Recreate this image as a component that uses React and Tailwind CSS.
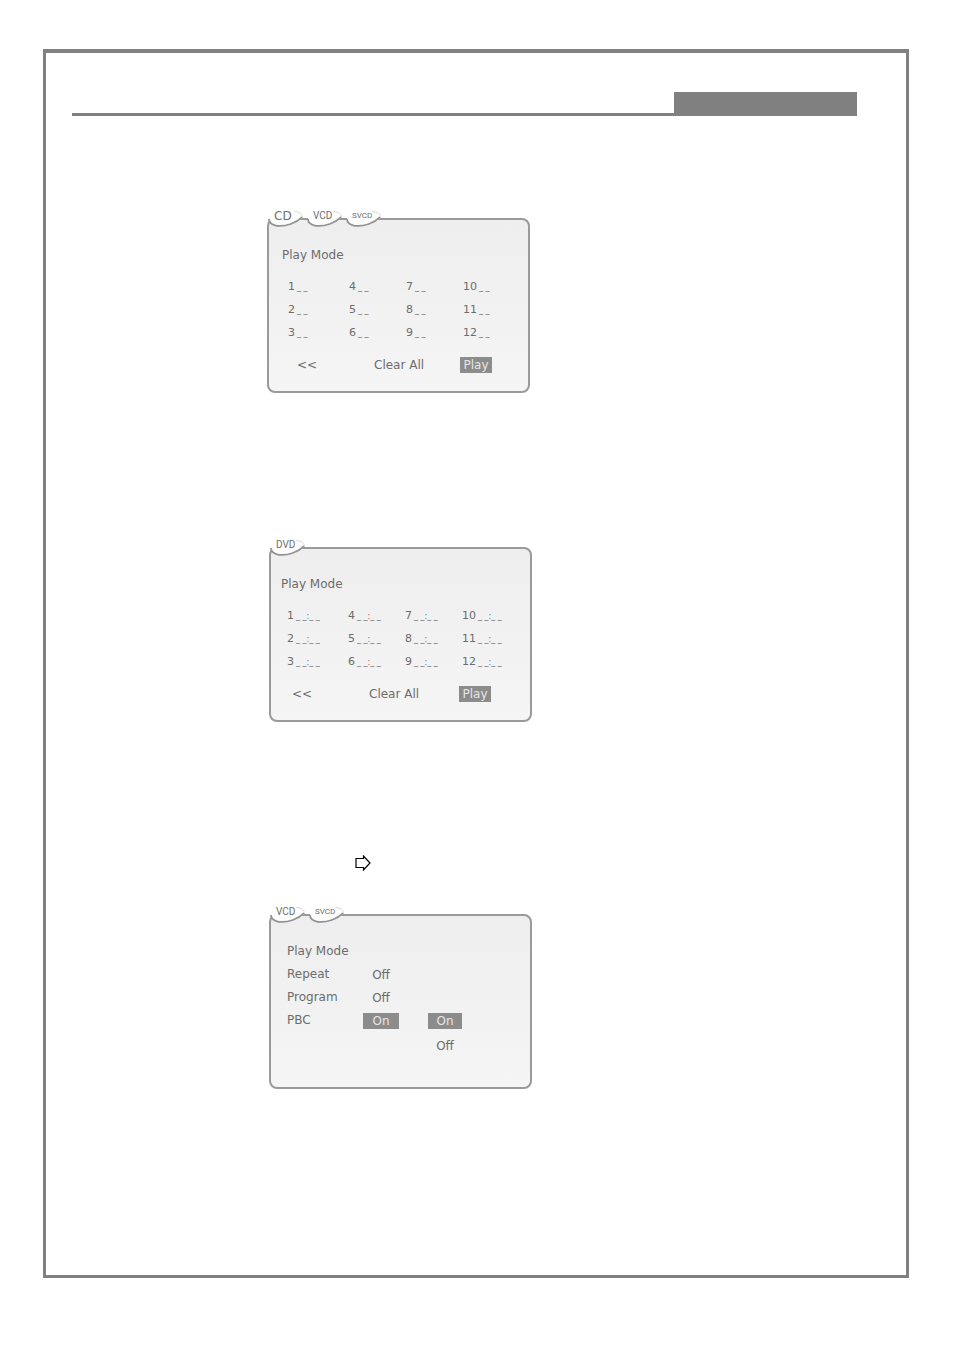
import clsx from "clsx";

const SLOT_ROWS = [
  [1, 4, 7, 10],
  [2, 5, 8, 11],
  [3, 6, 9, 12],
];

function DiscTab({ label, className }) {
  return (
    <span className="relative block h-[18px] w-[35px]">
      <svg viewBox="0 0 36 18" className="absolute inset-0 h-full w-full" fill="none">
        <path d="M1 8 C4 2 12 0 24 1 C32 1 36 4 35 8 C29 14 19 18 9 16 C4 15 1 12 1 8Z" fill="#fdfdfd" />
        <path d="M27 1 C33 2 36 4 35 8" stroke="#d4d4d4" />
        <path d="M1 9 C1 13 4 15 9 16 C19 17 29 13 35 7" stroke="#929292" strokeWidth="1.8" />
      </svg>
      <span className={clsx("absolute left-[6px] top-0 leading-3 text-[#707070]", className)}>{label}</span>
    </span>
  );
}

function Screen({ tabs, className, children }) {
  return (
    <section
      className={clsx(
        "relative w-[263px] rounded-lg border-2 border-[#9a9a9a] bg-linear-to-b from-[#eeeeee] to-[#f5f5f5] font-['DejaVu_Sans',sans-serif] text-[12px] leading-4 text-[#6c6c6c]",
        className
      )}
    >
      <div className="absolute -left-px -top-[10px] flex gap-1">{tabs}</div>
      {children}
    </section>
  );
}

function ProgramScreen({ tabs, className, slot, actionsClass }) {
  return (
    <Screen tabs={tabs} className={clsx("pb-[18px] pt-[27px]", className)}>
      <h2>Play Mode</h2>
      <table className="ml-[6px] mt-3 table-fixed text-[11px]">
        <tbody>
          {SLOT_ROWS.map((row) => (
            <tr key={row[0]} className="h-[23px]">
              {row.map((n) => (
                <td key={n} className="w-[57px] p-0 first:w-[61px]">
                  <span className="flex items-baseline gap-[2px]">
                    {n}
                    <span className="whitespace-nowrap text-[8px] leading-3">{slot}</span>
                  </span>
                </td>
              ))}
            </tr>
          ))}
        </tbody>
      </table>
      <div className={clsx("mt-[13px] grid items-center", actionsClass)}>
        <button type="button" className="text-left">&lt;&lt;</button>
        <button type="button" className="text-left">Clear All</button>
        <button type="button" className="bg-[#8c8c8c] text-center text-[#e6e6e6]">Play</button>
      </div>
    </Screen>
  );
}

function PbcScreen({ tabs, className }) {
  return (
    <Screen tabs={tabs} className={clsx("pb-[33px] pl-4 pt-[27px]", className)}>
      <h2>Play Mode</h2>
      <div className="mt-1 grid grid-cols-[76px_36px] items-center">
        <span className="leading-[23px]">Repeat</span>
        <span className="text-center">Off</span>
        <span className="leading-[23px]">Program</span>
        <span className="text-center">Off</span>
      </div>
      <div className="grid grid-cols-[76px_36px_29px_34px] items-center">
        <span className="leading-[23px]">PBC</span>
        <button type="button" className="bg-[#8c8c8c] text-center text-[#e6e6e6]">On</button>
        <span />
        <button type="button" className="bg-[#8c8c8c] text-center text-[#e6e6e6]">On</button>
        <button type="button" className="col-start-4 pt-[6px] text-center">Off</button>
      </div>
    </Screen>
  );
}

export default function App() {
  return (
    <div className="min-h-screen bg-white pb-[71px] pl-[43px] pr-[45px] pt-[49px]">
      <main className="border-[3px] border-t-4 border-[#808080] pb-[186px] pl-[26px] pr-[49px] pt-[39px]">
        <header className="flex justify-end border-b-[3px] border-[#808080]">
          <div className="h-[21px] w-[183px] bg-[#808080]" />
        </header>

        <ProgramScreen
          className="ml-[195px] mt-[102px] pl-[13px]"
          slot="_ _"
          actionsClass="ml-[15px] grid-cols-[77px_86px_32px]"
          tabs={
            <>
              <DiscTab label="CD" className="text-[12px]" />
              <DiscTab label="VCD" className="font-[Roboto,sans-serif] text-[10px]" />
              <DiscTab label="SVCD" className="font-[Roboto,sans-serif] text-[8px]" />
            </>
          }
        />

        <ProgramScreen
          className="ml-[197px] mt-[154px] pl-[10px]"
          slot="_ _:_ _"
          actionsClass="ml-[11px] grid-cols-[77px_90px_32px]"
          tabs={<DiscTab label="DVD" className="font-[Roboto,sans-serif] text-[10px]" />}
        />

        {/* Block arrow between the steps */}
        <svg viewBox="0 0 16 16" className="ml-[283px] mt-[133px] block h-4 w-4" fill="#fff" stroke="#000" strokeWidth="1.2">
          <path d="M1 3.5H8.5V1L15 8L8.5 15V12.5H1Z" />
        </svg>

        <PbcScreen
          className="ml-[197px] mt-[43px]"
          tabs={
            <>
              <DiscTab label="VCD" className="font-[Roboto,sans-serif] text-[10px]" />
              <DiscTab label="SVCD" className="font-[Roboto,sans-serif] text-[8px]" />
            </>
          }
        />
      </main>
    </div>
  );
}
